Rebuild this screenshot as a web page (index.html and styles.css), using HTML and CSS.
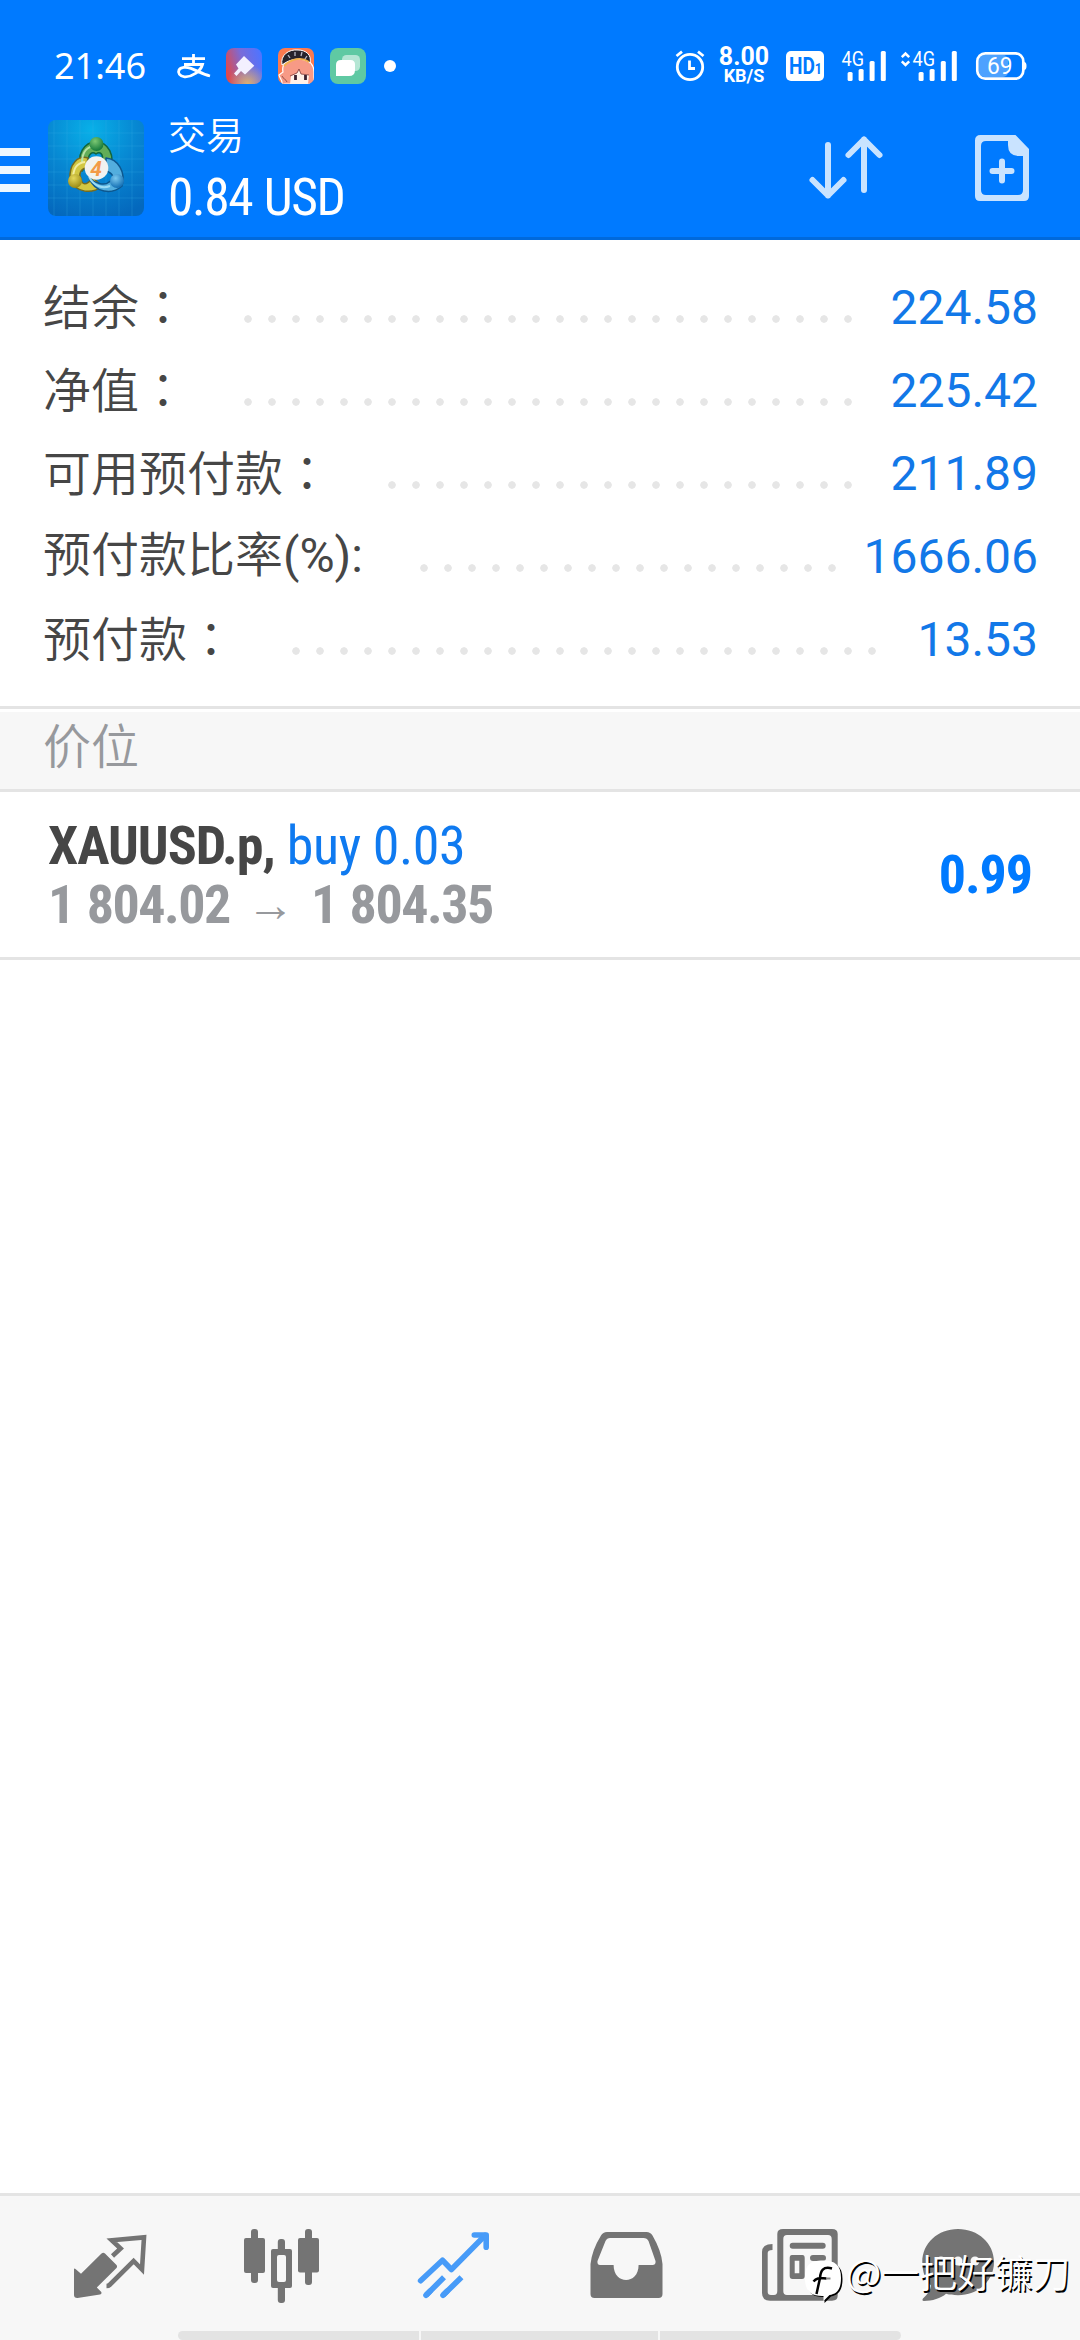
FILE: index.html
```html
<!DOCTYPE html>
<html lang="zh-CN">
<head>
<meta charset="utf-8">
<title>交易</title>
<link rel="stylesheet" href="styles.css">
</head>
<body>
<div class="screen">
  <header class="header">
    <div class="status">
      <span class="clock">21:46</span>
      <svg class="st-pay" width="36" height="28" viewBox="176 52 36 28" fill="none" stroke="#fff" stroke-width="2.8">
        <path d="M182 58.6H205M193.500 54V64.500M184 64.500H202.500C200.500 71.500 192 77.300 184.500 76.800C179.500 76.400 177.600 72.800 179 70C180.600 67 186 66.600 191 68.400C197 70.600 203 74.200 210 76"/>
      </svg>
      <svg class="st-app" width="36" height="36" viewBox="0 0 36 36">
        <defs>
          <linearGradient id="cl" x1="0" y1=".6" x2="1" y2=".3"><stop offset="0" stop-color="#e0484c"/><stop offset=".5" stop-color="#7a6bd8"/><stop offset="1" stop-color="#4f74ff"/></linearGradient>
          <radialGradient id="cy" cx=".6" cy="1" r=".55"><stop offset="0" stop-color="#dcb070"/><stop offset="1" stop-color="#dcb070" stop-opacity="0"/></radialGradient>
        </defs>
        <rect width="36" height="36" rx="8" fill="url(#cl)"/><rect width="36" height="36" rx="8" fill="url(#cy)"/>
        <path d="M18 8L28.300 17.800L19 26.500L15 23L10.500 28L8 25.500L12.500 20.500L10 16.500Z" fill="#f3f0ff"/>
      </svg>
      <svg class="st-app" width="36" height="36" viewBox="0 0 36 36">
        <defs><clipPath id="ac"><rect width="36" height="36" rx="7"/></clipPath></defs>
        <g clip-path="url(#ac)">
          <rect width="36" height="36" fill="#fb7a50"/>
          <path d="M4 36C5 33 1 29 1 27L5 24C3 14 12 10 20 9C30 9 36 17 36 24V36Z" fill="#f79a86" stroke="#fff" stroke-width="1.200"/>
          <path d="M4 17C2 7 11 1 20 2C28 2 34 7 32 15C24 9 13 10 4 17Z" fill="#27242d" stroke="#fff" stroke-width="1"/>
          <path d="M6 18C14 10 24 9 31 14" fill="none" stroke="#f3b14b" stroke-width="1.800"/>
          <path d="M10 7L12 10M17 4V8M24 4L23 8M29 8L27 11" stroke="#b9bac8" stroke-width="1.300"/>
          <path d="M12 36L13 28L19 25L21 22L23 26L31 27L30 36Z" fill="#fff1e8"/>
          <path d="M17.500 27V32M27.500 27V32" stroke="#3b2230" stroke-width="2.800"/>
          <path d="M12 28L19 25L21 21L23 26L31 27M4 28C5 31 8 31 9 34" fill="none" stroke="#7d3e3c" stroke-width=".8"/>
        </g>
      </svg>
      <svg class="st-app" width="36" height="36" viewBox="0 0 36 36">
        <rect width="36" height="36" rx="8" fill="#5fc9a3"/>
        <rect x="12" y="7" width="18" height="16" rx="4.500" fill="#b5e6d4"/>
        <path d="M6 28V17Q6 12 11 12H20.500Q25 12 25 16.500V22Q25 28 19 28Z" fill="#fff"/>
      </svg>
      <i class="st-dot"></i>
      <svg class="st-alarm" width="30" height="32" viewBox="675 51 30 32" fill="none" stroke="#fff" stroke-width="2.800">
        <circle cx="690" cy="68" r="12.700"/><path d="M676.500 57L682 52.700M703.500 57L698 52.700"/><path d="M689.500 61.500V69.500H695"/>
      </svg>
      <span class="speed"><b>8.00</b><small>KB/S</small></span>
      <svg class="st-hd" width="38" height="30" viewBox="786 51 38 30">
        <rect x="786" y="51" width="38" height="30" rx="5" fill="#fff"/>
        <text class="hd" x="789" y="74" textLength="33" lengthAdjust="spacingAndGlyphs">HD<tspan class="hd-one">1</tspan></text>
      </svg>
      <svg class="st-sig" width="46" height="32" viewBox="842 50 46 32" fill="#fff">
        <text class="net" x="841.500" y="65.800" textLength="22.500" lengthAdjust="spacingAndGlyphs">4G</text>
        <rect x="847.600" y="72" width="5" height="9" rx="1.500"/><rect x="858.600" y="69" width="5" height="12" rx="1.500"/><rect x="869.600" y="61" width="5" height="20" rx="1.500"/><rect x="880.800" y="51" width="5" height="30" rx="1.500"/>
      </svg>
      <svg class="st-sig2" width="58" height="32" viewBox="900 50 58 32" fill="#fff">
        <path d="M901.800 57.200L905.500 53.500L909.200 57.200M901.800 61.300L905.500 65L909.200 61.300" fill="none" stroke="#fff" stroke-width="2.500"/>
        <text class="net" x="912.500" y="65.800" textLength="22.500" lengthAdjust="spacingAndGlyphs">4G</text>
        <rect x="918.600" y="72" width="5" height="9" rx="1.500"/><rect x="929.600" y="69" width="5" height="12" rx="1.500"/><rect x="940.800" y="61" width="5" height="20" rx="1.500"/><rect x="951.800" y="51" width="5" height="30" rx="1.500"/>
      </svg>
      <svg class="st-bat" width="52" height="30" viewBox="975 51 52 30">
        <rect x="979" y="55" width="29" height="22" rx="5" fill="#4da2ff"/>
        <rect x="977.300" y="53.300" width="46" height="25.400" rx="8" fill="none" stroke="#fff" stroke-width="2.700"/>
        <path d="M1024 62Q1026.500 62 1026.500 66T1024 70Z" fill="#fff"/>
        <text class="bat" x="987" y="73.500" textLength="25.500" lengthAdjust="spacingAndGlyphs">69</text>
      </svg>
    </div>
    <div class="appbar">
      <span class="menu"><i></i><i></i><i></i></span>
      <svg class="logo" width="96" height="96" viewBox="0 0 96 96">
        <defs>
          <radialGradient id="bg" cx=".45" cy=".1" r=".95"><stop offset="0" stop-color="#08b0e8"/><stop offset=".5" stop-color="#0787d2"/><stop offset="1" stop-color="#0468bd"/></radialGradient>
          <radialGradient id="g" cx=".4" cy=".3" r=".7"><stop offset="0" stop-color="#7cc873"/><stop offset="1" stop-color="#14793a"/></radialGradient>
          <radialGradient id="y" cx=".4" cy=".3" r=".7"><stop offset="0" stop-color="#e5d85a"/><stop offset="1" stop-color="#9b8a16"/></radialGradient>
          <radialGradient id="b" cx=".4" cy=".3" r=".7"><stop offset="0" stop-color="#7cc9ef"/><stop offset="1" stop-color="#136fb4"/></radialGradient>
        </defs>
        <rect width="96" height="96" rx="8" fill="url(#bg)"/>
        <path d="M6 0V96M19 0V96M32 0V96M45 0V96M58 0V96M71 0V96M84 0V96M0 13H96M0 26H96M0 39H96M0 52H96M0 65H96M0 78H96" stroke="#36b4e8" stroke-opacity=".25"/>
        <g stroke-linejoin="round">
          <path d="M34 51C27 34 37 22 48 22C60 22 68 35 62 52L54 42C56 34 52 31 48 34C44 31 40 34 40 42Z" fill="#62ad58" stroke="#12663e" stroke-width="1.500"/>
          <path d="M40 38C30 35 21 44 22 59C28 74 45 74 54 66L45 58C38 66 34 65 33 59C30 54 33 49 38 48Z" fill="#d2c742" stroke="#756b20" stroke-width="1.500"/>
          <path d="M58 38C70 39 78 52 74 66C64 75 47 73 41 58C48 64 57 66 61 62C68 59 65 53 58 51Z" fill="#53aede" stroke="#0d578e" stroke-width="1.500"/>
          <path d="M41 57C46 66 54 69 62 66" fill="none" stroke="#9bdcf5" stroke-width="2"/>
          <path d="M34 43C34 31 40 26 48 26" fill="none" stroke="#b7e2a6" stroke-width="2"/>
          <path d="M37 42C28 43 26 49 25 56" fill="none" stroke="#f3eda0" stroke-width="2"/>
        </g>
        <circle cx="48.500" cy="24" r="7" fill="url(#g)"/><circle cx="27" cy="61" r="7" fill="url(#y)"/><circle cx="69" cy="61" r="7" fill="url(#b)"/>
        <circle cx="48.500" cy="48" r="11.800" fill="#f2f2f0"/>
        <text class="four" x="48" y="55.500" text-anchor="middle">4</text>
      </svg>
      <div class="titles"><span class="title">交易</span><span class="balance">0.84 USD</span></div>
      <svg class="sort" width="76" height="66" viewBox="808 135 76 66" fill="none" stroke="#c9e3ff" stroke-width="6" stroke-linecap="round" stroke-linejoin="round">
        <path d="M828 145V195.500M812.500 180L828 195.500L843.500 180M864 190V139.500M848.500 155L864 139.500L879.500 155"/>
      </svg>
      <svg class="new-order" width="56" height="68" viewBox="974 134 56 68">
        <path fill="#c9e3ff" fill-rule="evenodd" d="M980.500 135H1015.500L1029 149V196Q1029 201 1024 201H980Q975 201 975 196V140.500Q975 135 980.500 135ZM986 141Q981 141 981 146V190Q981 195 986 195H1018Q1023 195 1023 190V156H1019Q1008 156 1008 145V141Z"/>
        <path d="M1002 161.500V180.500M992.500 171H1011.500" stroke="#c9e3ff" stroke-width="6" stroke-linecap="round"/>
      </svg>
    </div>
  </header>

  <section class="summary">
    <div class="line"><span class="label">结余<em lang="zh-TW">：</em></span><span class="dots" style="--n:26"></span><span class="value">224.58</span></div>
    <div class="line"><span class="label">净值<em lang="zh-TW">：</em></span><span class="dots" style="--n:26"></span><span class="value">225.42</span></div>
    <div class="line"><span class="label">可用预付款<em lang="zh-TW">：</em></span><span class="dots" style="--n:20"></span><span class="value">211.89</span></div>
    <div class="line"><span class="label">预付款比率<span class="unit">(%):</span></span><span class="dots" style="--n:18"></span><span class="value">1666.06</span></div>
    <div class="line"><span class="label">预付款<em lang="zh-TW">：</em></span><span class="dots" style="--n:25"></span><span class="value">13.53</span></div>
  </section>

  <h2 class="section">价位</h2>

  <div class="position">
    <div class="deal">
      <div class="deal-top"><b class="symbol">XAUUSD.p,</b><span class="side">buy 0.03</span></div>
      <div class="prices"><span>1 804.02</span><span class="arrow">→</span><span>1 804.35</span></div>
    </div>
    <b class="profit">0.99</b>
  </div>

  <nav class="tabs">
    <svg class="t1" width="76" height="76" viewBox="72 2228 76 76" fill="#747474">
      <path d="M74 2269.500Q74 2268 75.500 2269L81 2273.700L101.500 2253.400Q103.300 2252 105 2253.400L116.500 2265Q117.600 2266.600 116.500 2268L96.800 2287.500L101.300 2292Q102 2294 100 2294.500L77.500 2297.900Q74 2298 74 2295Z"/>
      <path d="M112.500 2256L120.600 2248.500L111.800 2240.300L144 2237.400L142 2269.500L133.600 2261L109.500 2285Q108.500 2286 106.500 2286" fill="none" stroke="#747474" stroke-width="4.600"/>
    </svg>
    <svg class="t2" width="76" height="76" viewBox="243 2228 76 76" fill="#747474">
      <rect x="251" y="2229" width="7" height="54" rx="3"/><rect x="244" y="2238" width="21" height="35" rx="2"/>
      <rect x="277.800" y="2239" width="7.200" height="64" rx="3"/><rect x="271" y="2249" width="21" height="39" rx="2"/><rect x="277" y="2255" width="9" height="27" rx="2" fill="#f7f7f7"/>
      <rect x="305" y="2229" width="7" height="56" rx="3"/><rect x="298" y="2238" width="21" height="34.500" rx="2"/>
    </svg>
    <svg class="t3" width="76" height="76" viewBox="416 2228 76 76" fill="none" stroke="#479bf8" stroke-width="5.600" stroke-linejoin="round">
      <path d="M420.600 2280.700L442.500 2260.300L451.400 2269.500L485 2235.500" stroke-linecap="round"/><path d="M474.300 2235H486.200V2247.300" stroke-linecap="round"/><path d="M426 2295.300L444 2277.300M443 2295.300L461.500 2277.300"/>
      <path d="M426 2295.300L430 2291.300M443 2295.300L447 2291.300" stroke-linecap="round"/>
    </svg>
    <svg class="t4" width="76" height="76" viewBox="589 2228 76 76">
      <path fill="#747474" fill-rule="evenodd" d="M607 2232H646.500Q650.500 2232 652.500 2235.500Q661.500 2251 662.500 2264V2294Q662.500 2298 658.500 2298H594.500Q590.500 2298 590.500 2294V2264Q592 2250 601 2235.500Q603 2232 607 2232ZM610 2238Q607 2238 605.500 2241L597.500 2261Q597 2265 600 2265H613.600C613.600 2285 638.600 2285 638.600 2265H652.500Q656 2265 655.500 2261L648.500 2241Q647 2238 643.500 2238Z"/>
    </svg>
    <svg class="t5" width="78" height="76" viewBox="761 2228 78 76">
      <path fill="#747474" fill-rule="evenodd" d="M783 2229H832Q837.700 2229 837.700 2234V2295.500Q837.700 2300.700 832 2300.700H770Q762 2300.700 762 2293V2252Q762 2244 772.500 2244V2250Q767.700 2250 767.700 2253V2292Q767.700 2295 771 2295H774Q777.300 2295 777.300 2291V2234Q777.300 2229 783 2229ZM787 2235Q783.300 2235 783.300 2239V2291Q783.300 2295 787 2295H828Q831.700 2295 831.700 2291V2239Q831.700 2235 828 2235Z"/>
      <path d="M792.700 2245.700H822.700M813 2258H823M813 2276H823" stroke="#747474" stroke-width="6" stroke-linecap="round"/>
      <path fill="#747474" fill-rule="evenodd" d="M792 2255H802.500Q804.700 2255 804.700 2258V2276Q804.700 2279 802 2279H792.500Q789.700 2279 789.700 2276V2258Q789.700 2255 792 2255ZM794.700 2260.700V2273.300H799.300V2260.700Z"/>
    </svg>
    <svg class="t6" width="76" height="76" viewBox="920 2228 76 76" fill="#747474">
      <path d="M958 2229C978 2229 994 2243 994 2262S978 2295.200 958 2295.200C953 2295.200 950 2295 946 2293.800C941 2298.500 932 2301 924 2301Q921.500 2301 923 2298.500C928 2294 930.500 2290 931 2285.500C925.500 2280 922.300 2272 922.300 2262C922.300 2243 938 2229 958 2229Z"/>
      <circle cx="941" cy="2261" r="4.500" fill="#f7f7f7"/><circle cx="958" cy="2261" r="4.500" fill="#f7f7f7"/><circle cx="975" cy="2261" r="4.500" fill="#f7f7f7"/>
    </svg>
  </nav>

  <div class="gesture"><i></i><i></i><i></i></div>

  <div class="watermark">
    <svg width="42" height="44" viewBox="803 2259 42 44">
      <path d="M823 2262C836 2262 842.500 2266 842.500 2279C842.500 2291 838 2295 831 2296.500L824.500 2303V2297C811 2297.500 806.500 2291 806.500 2279C806.500 2266 811 2262 823 2262Z" fill="#000"/>
      <path d="M823 2260.500C835 2260.500 841 2265 841 2278C841 2290 836.500 2294 829.500 2295L823.500 2301V2296C809.500 2296.500 805 2290 805 2278C805 2265 810 2260.500 823 2260.500Z" fill="#fff"/>
      <path d="M832 2268.500C823 2266 820.500 2271 820 2278L816.500 2294M813.500 2281.500C817 2277 821 2278.500 826.500 2278.500" fill="none" stroke="#000" stroke-width="2.500"/>
      <path d="M827 2278.500H830.500" stroke="#888" stroke-width="2"/>
    </svg>
    <span>@一把好镰刀</span>
  </div>
</div>
</body>
</html>
```
FILE: styles.css
```css
* { box-sizing: border-box; }
body { margin: 0; background: #fff; font-family: Roboto, "Noto Sans CJK SC", sans-serif; }
svg { display: block; flex: none; overflow: visible; }
i, em { font-style: normal; }

.screen { position: relative; width: 1080px; height: 2340px; display: flex; flex-direction: column; overflow: hidden; background: #fff; }

.header { height: 240px; background: #007aff; border-bottom: 3px solid #0069db; color: #fff; }
.status { height: 113px; padding: 19px 53px 0 54px; display: flex; align-items: center; }
.clock { width: 94px; font: 400 36px/36px "Noto Sans", sans-serif; }
.st-pay { margin-left: 28px; }
.st-app { margin-left: 16px; }
.st-pay + .st-app { margin-left: 14px; }
.st-dot { width: 12px; height: 12px; margin-left: 18px; border-radius: 50%; background: #fff; }
.st-alarm { margin-left: auto; }
.speed { width: 52px; margin-left: 13px; display: flex; flex-direction: column; align-items: center; }
.speed b { font-size: 25px; line-height: 20px; }
.speed small { font-size: 18px; line-height: 18px; font-weight: 700; }
.st-hd { margin-left: 16px; }
.st-sig { margin-left: 18px; }
.st-sig2 { margin-left: 12px; }
.st-bat { margin-left: 17px; }
.hd { font: 700 23px Roboto, sans-serif; fill: #007aff; }
.hd-one { font-size: 15px; }
.net { font: 400 21px Roboto, sans-serif; }
.bat { font: 400 23px Roboto, sans-serif; fill: #fff; }

.appbar { height: 110px; display: flex; align-items: center; padding-right: 50px; }
.menu { width: 30px; display: grid; gap: 10px; margin-top: 4px; }
.menu i { height: 8px; background: #ecf7ff; }
.logo { margin-left: 18px; }
.four { font: italic 700 21px Roboto, sans-serif; fill: #f39a48; }
.titles { display: flex; flex-direction: column; margin-left: 24px; }
.title { font-size: 38px; line-height: 48px; font-weight: 350; }
.balance { margin: 7px 0 -4px; font: 400 51.500px/62px "Roboto Condensed", sans-serif; letter-spacing: -1.400px; word-spacing: 1px; }
.sort { margin-left: auto; }
.new-order { margin-left: 90px; }

.summary { height: 466px; padding: 26px 42px 0 43px; }
.line { height: 83px; display: flex; align-items: center; color: #464646; font-size: 48px; line-height: 83px; }
.label { margin-top: -3px; font-weight: 350; white-space: nowrap; }
.label em { font-family: "Noto Sans CJK TC", sans-serif; }
.unit { font-weight: 400; }
.dots { width: calc(var(--n) * 24px); height: 8px; margin: 22px 0 0 49px; background: radial-gradient(circle at 12px 4px, #e6e6e6 3.400px, transparent 4.100px) 0 0 / 24px 8px; }
.value { margin-left: auto; color: #1278e8; }

.section { height: 86px; margin: 0; padding: 0 43px; border: solid #e4e4e4; border-width: 3px 0; background: #f7f7f7; box-shadow: inset 0 3px #fff; color: #97999d; font-size: 48px; line-height: 77px; font-weight: 350; }

.position { height: 168px; padding: 0 48px; display: flex; align-items: center; justify-content: space-between; border-bottom: 3px solid #e4e4e4; font-family: "Roboto Condensed", sans-serif; font-size: 54px; line-height: 59px; }
.deal-top { display: flex; gap: 12px; color: #464646; }
.symbol { letter-spacing: -1px; }
.side { color: #0f7af0; letter-spacing: -.4px; }
.prices { display: flex; color: #97999d; font-weight: 700; letter-spacing: -1.500px; word-spacing: 2px; }
.arrow { width: 81px; text-align: center; font: 400 48px/59px "Liberation Sans", sans-serif; letter-spacing: 0; }
.profit { color: #007aff; letter-spacing: -1.100px; }

.tabs { height: 147px; margin-top: auto; padding-left: 72px; display: flex; align-items: flex-start; padding-top: 32px; border-top: 3px solid #e4e4e4; background: #f7f7f7; }
.t2 { margin-left: 95px; }
.t3 { margin-left: 97px; }
.t4 { margin-left: 97px; }
.t5 { margin-left: 96px; }
.t6 { margin-left: 81px; }

.gesture { position: absolute; left: 178px; bottom: 0; width: 723px; height: 9px; display: grid; grid-template-columns: 1fr 237px 1fr; gap: 2px; border-radius: 5px; overflow: hidden; }
.gesture i { background: #e3e3e3; }

.watermark { position: absolute; left: 803px; top: 2249px; display: flex; align-items: flex-start; gap: 1px; color: #fff; font-family: "Noto Sans CJK SC", sans-serif; font-size: 37.800px; line-height: 44px; font-weight: 350; white-space: nowrap; text-shadow: 1.500px 1.500px 0 #000; }
.watermark svg { margin-top: 10px; }
.watermark span { margin-top: 0; }
```
